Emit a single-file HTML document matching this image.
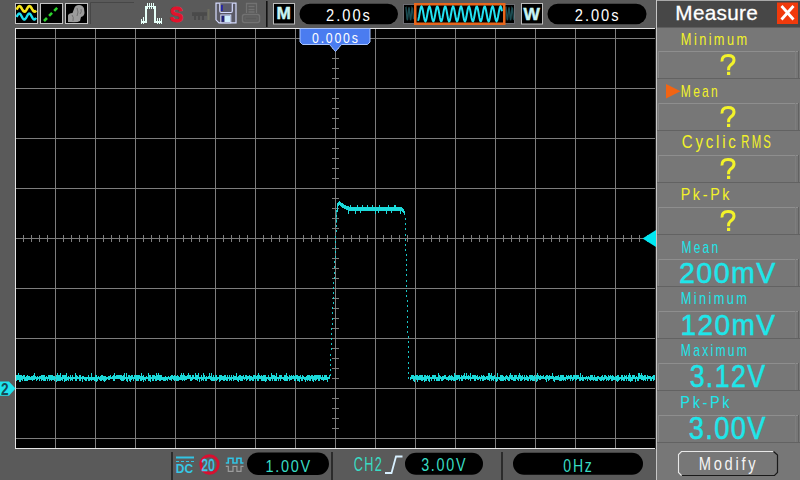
<!DOCTYPE html>
<html><head><meta charset="utf-8"><style>
html,body{margin:0;padding:0;width:800px;height:480px;overflow:hidden;background:#5a5a5a}
.t{position:absolute;left:0;top:0;white-space:pre;line-height:1;transform-origin:0 0;font-family:"Liberation Sans", sans-serif}
</style></head><body>
<svg width="800" height="480" viewBox="0 0 800 480" style="position:absolute;left:0;top:0"><rect x="15" y="28" width="641" height="421" fill="#000"/><rect x="55" y="29" width="1" height="419" fill="#7d7d7d"/><rect x="95" y="29" width="1" height="419" fill="#7d7d7d"/><rect x="135" y="29" width="1" height="419" fill="#7d7d7d"/><rect x="175" y="29" width="1" height="419" fill="#7d7d7d"/><rect x="215" y="29" width="1" height="419" fill="#7d7d7d"/><rect x="255" y="29" width="1" height="419" fill="#7d7d7d"/><rect x="295" y="29" width="1" height="419" fill="#7d7d7d"/><rect x="335" y="29" width="1" height="419" fill="#7d7d7d"/><rect x="375" y="29" width="1" height="419" fill="#7d7d7d"/><rect x="415" y="29" width="1" height="419" fill="#7d7d7d"/><rect x="455" y="29" width="1" height="419" fill="#7d7d7d"/><rect x="495" y="29" width="1" height="419" fill="#7d7d7d"/><rect x="535" y="29" width="1" height="419" fill="#7d7d7d"/><rect x="575" y="29" width="1" height="419" fill="#7d7d7d"/><rect x="615" y="29" width="1" height="419" fill="#7d7d7d"/><rect x="16" y="38" width="639" height="1" fill="#7d7d7d"/><rect x="16" y="88" width="639" height="1" fill="#7d7d7d"/><rect x="16" y="138" width="639" height="1" fill="#7d7d7d"/><rect x="16" y="188" width="639" height="1" fill="#7d7d7d"/><rect x="16" y="238" width="639" height="1" fill="#7d7d7d"/><rect x="16" y="288" width="639" height="1" fill="#7d7d7d"/><rect x="16" y="338" width="639" height="1" fill="#7d7d7d"/><rect x="16" y="388" width="639" height="1" fill="#7d7d7d"/><rect x="16" y="438" width="639" height="1" fill="#7d7d7d"/><rect x="23" y="235" width="1" height="7" fill="#7d7d7d"/><rect x="31" y="235" width="1" height="7" fill="#7d7d7d"/><rect x="39" y="235" width="1" height="7" fill="#7d7d7d"/><rect x="47" y="235" width="1" height="7" fill="#7d7d7d"/><rect x="55" y="235" width="1" height="7" fill="#7d7d7d"/><rect x="63" y="235" width="1" height="7" fill="#7d7d7d"/><rect x="71" y="235" width="1" height="7" fill="#7d7d7d"/><rect x="79" y="235" width="1" height="7" fill="#7d7d7d"/><rect x="87" y="235" width="1" height="7" fill="#7d7d7d"/><rect x="95" y="235" width="1" height="7" fill="#7d7d7d"/><rect x="103" y="235" width="1" height="7" fill="#7d7d7d"/><rect x="111" y="235" width="1" height="7" fill="#7d7d7d"/><rect x="119" y="235" width="1" height="7" fill="#7d7d7d"/><rect x="127" y="235" width="1" height="7" fill="#7d7d7d"/><rect x="135" y="235" width="1" height="7" fill="#7d7d7d"/><rect x="143" y="235" width="1" height="7" fill="#7d7d7d"/><rect x="151" y="235" width="1" height="7" fill="#7d7d7d"/><rect x="159" y="235" width="1" height="7" fill="#7d7d7d"/><rect x="167" y="235" width="1" height="7" fill="#7d7d7d"/><rect x="175" y="235" width="1" height="7" fill="#7d7d7d"/><rect x="183" y="235" width="1" height="7" fill="#7d7d7d"/><rect x="191" y="235" width="1" height="7" fill="#7d7d7d"/><rect x="199" y="235" width="1" height="7" fill="#7d7d7d"/><rect x="207" y="235" width="1" height="7" fill="#7d7d7d"/><rect x="215" y="235" width="1" height="7" fill="#7d7d7d"/><rect x="223" y="235" width="1" height="7" fill="#7d7d7d"/><rect x="231" y="235" width="1" height="7" fill="#7d7d7d"/><rect x="239" y="235" width="1" height="7" fill="#7d7d7d"/><rect x="247" y="235" width="1" height="7" fill="#7d7d7d"/><rect x="255" y="235" width="1" height="7" fill="#7d7d7d"/><rect x="263" y="235" width="1" height="7" fill="#7d7d7d"/><rect x="271" y="235" width="1" height="7" fill="#7d7d7d"/><rect x="279" y="235" width="1" height="7" fill="#7d7d7d"/><rect x="287" y="235" width="1" height="7" fill="#7d7d7d"/><rect x="295" y="235" width="1" height="7" fill="#7d7d7d"/><rect x="303" y="235" width="1" height="7" fill="#7d7d7d"/><rect x="311" y="235" width="1" height="7" fill="#7d7d7d"/><rect x="319" y="235" width="1" height="7" fill="#7d7d7d"/><rect x="327" y="235" width="1" height="7" fill="#7d7d7d"/><rect x="335" y="235" width="1" height="7" fill="#7d7d7d"/><rect x="343" y="235" width="1" height="7" fill="#7d7d7d"/><rect x="351" y="235" width="1" height="7" fill="#7d7d7d"/><rect x="359" y="235" width="1" height="7" fill="#7d7d7d"/><rect x="367" y="235" width="1" height="7" fill="#7d7d7d"/><rect x="375" y="235" width="1" height="7" fill="#7d7d7d"/><rect x="383" y="235" width="1" height="7" fill="#7d7d7d"/><rect x="391" y="235" width="1" height="7" fill="#7d7d7d"/><rect x="399" y="235" width="1" height="7" fill="#7d7d7d"/><rect x="407" y="235" width="1" height="7" fill="#7d7d7d"/><rect x="415" y="235" width="1" height="7" fill="#7d7d7d"/><rect x="423" y="235" width="1" height="7" fill="#7d7d7d"/><rect x="431" y="235" width="1" height="7" fill="#7d7d7d"/><rect x="439" y="235" width="1" height="7" fill="#7d7d7d"/><rect x="447" y="235" width="1" height="7" fill="#7d7d7d"/><rect x="455" y="235" width="1" height="7" fill="#7d7d7d"/><rect x="463" y="235" width="1" height="7" fill="#7d7d7d"/><rect x="471" y="235" width="1" height="7" fill="#7d7d7d"/><rect x="479" y="235" width="1" height="7" fill="#7d7d7d"/><rect x="487" y="235" width="1" height="7" fill="#7d7d7d"/><rect x="495" y="235" width="1" height="7" fill="#7d7d7d"/><rect x="503" y="235" width="1" height="7" fill="#7d7d7d"/><rect x="511" y="235" width="1" height="7" fill="#7d7d7d"/><rect x="519" y="235" width="1" height="7" fill="#7d7d7d"/><rect x="527" y="235" width="1" height="7" fill="#7d7d7d"/><rect x="535" y="235" width="1" height="7" fill="#7d7d7d"/><rect x="543" y="235" width="1" height="7" fill="#7d7d7d"/><rect x="551" y="235" width="1" height="7" fill="#7d7d7d"/><rect x="559" y="235" width="1" height="7" fill="#7d7d7d"/><rect x="567" y="235" width="1" height="7" fill="#7d7d7d"/><rect x="575" y="235" width="1" height="7" fill="#7d7d7d"/><rect x="583" y="235" width="1" height="7" fill="#7d7d7d"/><rect x="591" y="235" width="1" height="7" fill="#7d7d7d"/><rect x="599" y="235" width="1" height="7" fill="#7d7d7d"/><rect x="607" y="235" width="1" height="7" fill="#7d7d7d"/><rect x="615" y="235" width="1" height="7" fill="#7d7d7d"/><rect x="623" y="235" width="1" height="7" fill="#7d7d7d"/><rect x="631" y="235" width="1" height="7" fill="#7d7d7d"/><rect x="639" y="235" width="1" height="7" fill="#7d7d7d"/><rect x="647" y="235" width="1" height="7" fill="#7d7d7d"/><rect x="332" y="38" width="7" height="1" fill="#7d7d7d"/><rect x="332" y="48" width="7" height="1" fill="#7d7d7d"/><rect x="332" y="58" width="7" height="1" fill="#7d7d7d"/><rect x="332" y="68" width="7" height="1" fill="#7d7d7d"/><rect x="332" y="78" width="7" height="1" fill="#7d7d7d"/><rect x="332" y="88" width="7" height="1" fill="#7d7d7d"/><rect x="332" y="98" width="7" height="1" fill="#7d7d7d"/><rect x="332" y="108" width="7" height="1" fill="#7d7d7d"/><rect x="332" y="118" width="7" height="1" fill="#7d7d7d"/><rect x="332" y="128" width="7" height="1" fill="#7d7d7d"/><rect x="332" y="138" width="7" height="1" fill="#7d7d7d"/><rect x="332" y="148" width="7" height="1" fill="#7d7d7d"/><rect x="332" y="158" width="7" height="1" fill="#7d7d7d"/><rect x="332" y="168" width="7" height="1" fill="#7d7d7d"/><rect x="332" y="178" width="7" height="1" fill="#7d7d7d"/><rect x="332" y="188" width="7" height="1" fill="#7d7d7d"/><rect x="332" y="198" width="7" height="1" fill="#7d7d7d"/><rect x="332" y="208" width="7" height="1" fill="#7d7d7d"/><rect x="332" y="218" width="7" height="1" fill="#7d7d7d"/><rect x="332" y="228" width="7" height="1" fill="#7d7d7d"/><rect x="332" y="238" width="7" height="1" fill="#7d7d7d"/><rect x="332" y="248" width="7" height="1" fill="#7d7d7d"/><rect x="332" y="258" width="7" height="1" fill="#7d7d7d"/><rect x="332" y="268" width="7" height="1" fill="#7d7d7d"/><rect x="332" y="278" width="7" height="1" fill="#7d7d7d"/><rect x="332" y="288" width="7" height="1" fill="#7d7d7d"/><rect x="332" y="298" width="7" height="1" fill="#7d7d7d"/><rect x="332" y="308" width="7" height="1" fill="#7d7d7d"/><rect x="332" y="318" width="7" height="1" fill="#7d7d7d"/><rect x="332" y="328" width="7" height="1" fill="#7d7d7d"/><rect x="332" y="338" width="7" height="1" fill="#7d7d7d"/><rect x="332" y="348" width="7" height="1" fill="#7d7d7d"/><rect x="332" y="358" width="7" height="1" fill="#7d7d7d"/><rect x="332" y="368" width="7" height="1" fill="#7d7d7d"/><rect x="332" y="378" width="7" height="1" fill="#7d7d7d"/><rect x="332" y="388" width="7" height="1" fill="#7d7d7d"/><rect x="332" y="398" width="7" height="1" fill="#7d7d7d"/><rect x="332" y="408" width="7" height="1" fill="#7d7d7d"/><rect x="332" y="418" width="7" height="1" fill="#7d7d7d"/><rect x="332" y="428" width="7" height="1" fill="#7d7d7d"/><rect x="332" y="438" width="7" height="1" fill="#7d7d7d"/><rect x="15" y="28" width="641" height="1" fill="#e4e4e4"/><rect x="15" y="448" width="641" height="1" fill="#e4e4e4"/><rect x="15" y="28" width="1" height="421" fill="#e4e4e4"/><rect x="655" y="28" width="1" height="421" fill="#2a2a2a"/><g fill="#1cdada"><rect x="16" y="375" width="1" height="6"/><rect x="17" y="375" width="1" height="5"/><rect x="18" y="373" width="1" height="7"/><rect x="19" y="375" width="1" height="7"/><rect x="20" y="375" width="1" height="7"/><rect x="21" y="375" width="1" height="5"/><rect x="22" y="376" width="1" height="5"/><rect x="23" y="375" width="1" height="4"/><rect x="24" y="375" width="1" height="6"/><rect x="25" y="377" width="1" height="4"/><rect x="26" y="376" width="1" height="5"/><rect x="27" y="375" width="1" height="6"/><rect x="28" y="376" width="1" height="4"/><rect x="29" y="376" width="1" height="4"/><rect x="30" y="377" width="1" height="3"/><rect x="31" y="376" width="1" height="4"/><rect x="32" y="376" width="1" height="5"/><rect x="33" y="375" width="1" height="5"/><rect x="34" y="373" width="1" height="7"/><rect x="35" y="376" width="1" height="3"/><rect x="36" y="377" width="1" height="4"/><rect x="37" y="376" width="1" height="4"/><rect x="38" y="377" width="1" height="2"/><rect x="39" y="376" width="1" height="5"/><rect x="40" y="376" width="1" height="3"/><rect x="41" y="375" width="1" height="6"/><rect x="42" y="375" width="1" height="5"/><rect x="43" y="375" width="1" height="6"/><rect x="44" y="375" width="1" height="6"/><rect x="45" y="377" width="1" height="4"/><rect x="46" y="376" width="1" height="3"/><rect x="47" y="377" width="1" height="4"/><rect x="48" y="375" width="1" height="4"/><rect x="49" y="375" width="1" height="6"/><rect x="50" y="375" width="1" height="5"/><rect x="51" y="375" width="1" height="6"/><rect x="52" y="375" width="1" height="5"/><rect x="53" y="376" width="1" height="4"/><rect x="54" y="376" width="1" height="5"/><rect x="55" y="377" width="1" height="2"/><rect x="56" y="375" width="1" height="7"/><rect x="57" y="373" width="1" height="8"/><rect x="58" y="375" width="1" height="6"/><rect x="59" y="375" width="1" height="6"/><rect x="60" y="373" width="1" height="8"/><rect x="61" y="377" width="1" height="3"/><rect x="62" y="375" width="1" height="6"/><rect x="63" y="375" width="1" height="4"/><rect x="64" y="375" width="1" height="7"/><rect x="65" y="375" width="1" height="6"/><rect x="66" y="373" width="1" height="8"/><rect x="67" y="377" width="1" height="3"/><rect x="68" y="376" width="1" height="5"/><rect x="69" y="377" width="1" height="2"/><rect x="70" y="375" width="1" height="6"/><rect x="71" y="377" width="1" height="3"/><rect x="72" y="375" width="1" height="6"/><rect x="73" y="377" width="1" height="2"/><rect x="74" y="377" width="1" height="2"/><rect x="75" y="373" width="1" height="8"/><rect x="76" y="375" width="1" height="6"/><rect x="77" y="376" width="1" height="3"/><rect x="78" y="377" width="1" height="2"/><rect x="79" y="375" width="1" height="6"/><rect x="80" y="375" width="1" height="6"/><rect x="81" y="377" width="1" height="2"/><rect x="82" y="376" width="1" height="6"/><rect x="83" y="376" width="1" height="3"/><rect x="84" y="377" width="1" height="3"/><rect x="85" y="377" width="1" height="4"/><rect x="86" y="377" width="1" height="4"/><rect x="87" y="377" width="1" height="2"/><rect x="88" y="375" width="1" height="6"/><rect x="89" y="377" width="1" height="4"/><rect x="90" y="377" width="1" height="3"/><rect x="91" y="373" width="1" height="8"/><rect x="92" y="377" width="1" height="3"/><rect x="93" y="377" width="1" height="3"/><rect x="94" y="377" width="1" height="4"/><rect x="95" y="375" width="1" height="6"/><rect x="96" y="375" width="1" height="7"/><rect x="97" y="377" width="1" height="4"/><rect x="98" y="376" width="1" height="3"/><rect x="99" y="377" width="1" height="3"/><rect x="100" y="376" width="1" height="5"/><rect x="101" y="375" width="1" height="6"/><rect x="102" y="375" width="1" height="5"/><rect x="103" y="376" width="1" height="5"/><rect x="104" y="376" width="1" height="6"/><rect x="105" y="376" width="1" height="5"/><rect x="106" y="377" width="1" height="3"/><rect x="107" y="377" width="1" height="2"/><rect x="108" y="376" width="1" height="4"/><rect x="109" y="376" width="1" height="4"/><rect x="110" y="375" width="1" height="4"/><rect x="111" y="377" width="1" height="2"/><rect x="112" y="376" width="1" height="3"/><rect x="113" y="375" width="1" height="6"/><rect x="114" y="373" width="1" height="8"/><rect x="115" y="376" width="1" height="3"/><rect x="116" y="375" width="1" height="4"/><rect x="117" y="375" width="1" height="4"/><rect x="118" y="375" width="1" height="4"/><rect x="119" y="375" width="1" height="4"/><rect x="120" y="375" width="1" height="5"/><rect x="121" y="375" width="1" height="6"/><rect x="122" y="376" width="1" height="5"/><rect x="123" y="375" width="1" height="6"/><rect x="124" y="373" width="1" height="7"/><rect x="125" y="377" width="1" height="2"/><rect x="126" y="373" width="1" height="8"/><rect x="127" y="377" width="1" height="5"/><rect x="128" y="375" width="1" height="4"/><rect x="129" y="375" width="1" height="6"/><rect x="130" y="376" width="1" height="6"/><rect x="131" y="375" width="1" height="5"/><rect x="132" y="375" width="1" height="4"/><rect x="133" y="377" width="1" height="4"/><rect x="134" y="375" width="1" height="4"/><rect x="135" y="375" width="1" height="5"/><rect x="136" y="375" width="1" height="6"/><rect x="137" y="375" width="1" height="6"/><rect x="138" y="375" width="1" height="6"/><rect x="139" y="375" width="1" height="4"/><rect x="140" y="376" width="1" height="5"/><rect x="141" y="373" width="1" height="8"/><rect x="142" y="376" width="1" height="4"/><rect x="143" y="375" width="1" height="7"/><rect x="144" y="377" width="1" height="3"/><rect x="145" y="377" width="1" height="4"/><rect x="146" y="376" width="1" height="3"/><rect x="147" y="377" width="1" height="2"/><rect x="148" y="373" width="1" height="8"/><rect x="149" y="375" width="1" height="6"/><rect x="150" y="375" width="1" height="7"/><rect x="151" y="377" width="1" height="2"/><rect x="152" y="375" width="1" height="6"/><rect x="153" y="375" width="1" height="6"/><rect x="154" y="375" width="1" height="4"/><rect x="155" y="376" width="1" height="5"/><rect x="156" y="373" width="1" height="8"/><rect x="157" y="375" width="1" height="5"/><rect x="158" y="373" width="1" height="7"/><rect x="159" y="375" width="1" height="6"/><rect x="160" y="375" width="1" height="6"/><rect x="161" y="375" width="1" height="5"/><rect x="162" y="377" width="1" height="3"/><rect x="163" y="377" width="1" height="4"/><rect x="164" y="377" width="1" height="4"/><rect x="165" y="376" width="1" height="5"/><rect x="166" y="377" width="1" height="3"/><rect x="167" y="377" width="1" height="4"/><rect x="168" y="376" width="1" height="3"/><rect x="169" y="377" width="1" height="3"/><rect x="170" y="376" width="1" height="4"/><rect x="171" y="375" width="1" height="6"/><rect x="172" y="375" width="1" height="4"/><rect x="173" y="376" width="1" height="4"/><rect x="174" y="375" width="1" height="6"/><rect x="175" y="376" width="1" height="4"/><rect x="176" y="376" width="1" height="5"/><rect x="177" y="375" width="1" height="6"/><rect x="178" y="376" width="1" height="5"/><rect x="179" y="377" width="1" height="3"/><rect x="180" y="375" width="1" height="5"/><rect x="181" y="373" width="1" height="7"/><rect x="182" y="375" width="1" height="6"/><rect x="183" y="373" width="1" height="7"/><rect x="184" y="375" width="1" height="6"/><rect x="185" y="376" width="1" height="4"/><rect x="186" y="376" width="1" height="4"/><rect x="187" y="375" width="1" height="4"/><rect x="188" y="373" width="1" height="6"/><rect x="189" y="375" width="1" height="4"/><rect x="190" y="375" width="1" height="6"/><rect x="191" y="377" width="1" height="4"/><rect x="192" y="375" width="1" height="5"/><rect x="193" y="375" width="1" height="4"/><rect x="194" y="377" width="1" height="2"/><rect x="195" y="373" width="1" height="7"/><rect x="196" y="375" width="1" height="5"/><rect x="197" y="375" width="1" height="6"/><rect x="198" y="373" width="1" height="6"/><rect x="199" y="377" width="1" height="5"/><rect x="200" y="377" width="1" height="2"/><rect x="201" y="375" width="1" height="6"/><rect x="202" y="377" width="1" height="3"/><rect x="203" y="373" width="1" height="8"/><rect x="204" y="375" width="1" height="4"/><rect x="205" y="377" width="1" height="4"/><rect x="206" y="376" width="1" height="5"/><rect x="207" y="377" width="1" height="2"/><rect x="208" y="376" width="1" height="3"/><rect x="209" y="373" width="1" height="6"/><rect x="210" y="376" width="1" height="4"/><rect x="211" y="373" width="1" height="8"/><rect x="212" y="377" width="1" height="4"/><rect x="213" y="375" width="1" height="6"/><rect x="214" y="377" width="1" height="4"/><rect x="215" y="375" width="1" height="5"/><rect x="216" y="375" width="1" height="6"/><rect x="217" y="377" width="1" height="3"/><rect x="218" y="377" width="1" height="2"/><rect x="219" y="375" width="1" height="7"/><rect x="220" y="375" width="1" height="6"/><rect x="221" y="375" width="1" height="5"/><rect x="222" y="376" width="1" height="4"/><rect x="223" y="376" width="1" height="5"/><rect x="224" y="375" width="1" height="6"/><rect x="225" y="375" width="1" height="5"/><rect x="226" y="377" width="1" height="4"/><rect x="227" y="375" width="1" height="6"/><rect x="228" y="377" width="1" height="2"/><rect x="229" y="375" width="1" height="6"/><rect x="230" y="377" width="1" height="3"/><rect x="231" y="375" width="1" height="6"/><rect x="232" y="377" width="1" height="2"/><rect x="233" y="375" width="1" height="6"/><rect x="234" y="376" width="1" height="4"/><rect x="235" y="376" width="1" height="4"/><rect x="236" y="373" width="1" height="7"/><rect x="237" y="377" width="1" height="4"/><rect x="238" y="376" width="1" height="6"/><rect x="239" y="375" width="1" height="5"/><rect x="240" y="375" width="1" height="6"/><rect x="241" y="376" width="1" height="5"/><rect x="242" y="376" width="1" height="5"/><rect x="243" y="375" width="1" height="4"/><rect x="244" y="377" width="1" height="3"/><rect x="245" y="375" width="1" height="4"/><rect x="246" y="375" width="1" height="6"/><rect x="247" y="376" width="1" height="4"/><rect x="248" y="376" width="1" height="3"/><rect x="249" y="375" width="1" height="6"/><rect x="250" y="376" width="1" height="5"/><rect x="251" y="376" width="1" height="4"/><rect x="252" y="377" width="1" height="4"/><rect x="253" y="375" width="1" height="6"/><rect x="254" y="375" width="1" height="4"/><rect x="255" y="375" width="1" height="6"/><rect x="256" y="376" width="1" height="3"/><rect x="257" y="375" width="1" height="6"/><rect x="258" y="373" width="1" height="8"/><rect x="259" y="375" width="1" height="4"/><rect x="260" y="376" width="1" height="3"/><rect x="261" y="375" width="1" height="6"/><rect x="262" y="376" width="1" height="5"/><rect x="263" y="375" width="1" height="6"/><rect x="264" y="375" width="1" height="6"/><rect x="265" y="375" width="1" height="7"/><rect x="266" y="377" width="1" height="4"/><rect x="267" y="377" width="1" height="2"/><rect x="268" y="375" width="1" height="5"/><rect x="269" y="377" width="1" height="4"/><rect x="270" y="377" width="1" height="4"/><rect x="271" y="373" width="1" height="6"/><rect x="272" y="375" width="1" height="6"/><rect x="273" y="375" width="1" height="4"/><rect x="274" y="375" width="1" height="6"/><rect x="275" y="376" width="1" height="5"/><rect x="276" y="373" width="1" height="8"/><rect x="277" y="377" width="1" height="2"/><rect x="278" y="377" width="1" height="4"/><rect x="279" y="375" width="1" height="4"/><rect x="280" y="375" width="1" height="6"/><rect x="281" y="375" width="1" height="4"/><rect x="282" y="377" width="1" height="2"/><rect x="283" y="377" width="1" height="3"/><rect x="284" y="375" width="1" height="6"/><rect x="285" y="375" width="1" height="6"/><rect x="286" y="373" width="1" height="8"/><rect x="287" y="376" width="1" height="5"/><rect x="288" y="377" width="1" height="2"/><rect x="289" y="375" width="1" height="6"/><rect x="290" y="376" width="1" height="4"/><rect x="291" y="375" width="1" height="5"/><rect x="292" y="376" width="1" height="3"/><rect x="293" y="375" width="1" height="4"/><rect x="294" y="376" width="1" height="5"/><rect x="295" y="375" width="1" height="6"/><rect x="296" y="375" width="1" height="4"/><rect x="297" y="375" width="1" height="6"/><rect x="298" y="376" width="1" height="5"/><rect x="299" y="376" width="1" height="6"/><rect x="300" y="375" width="1" height="4"/><rect x="301" y="377" width="1" height="4"/><rect x="302" y="375" width="1" height="6"/><rect x="303" y="376" width="1" height="3"/><rect x="304" y="377" width="1" height="3"/><rect x="305" y="377" width="1" height="5"/><rect x="306" y="376" width="1" height="4"/><rect x="307" y="375" width="1" height="6"/><rect x="308" y="375" width="1" height="5"/><rect x="309" y="375" width="1" height="6"/><rect x="310" y="376" width="1" height="5"/><rect x="311" y="375" width="1" height="4"/><rect x="312" y="375" width="1" height="6"/><rect x="313" y="376" width="1" height="6"/><rect x="314" y="375" width="1" height="5"/><rect x="315" y="375" width="1" height="6"/><rect x="316" y="375" width="1" height="5"/><rect x="317" y="375" width="1" height="4"/><rect x="318" y="375" width="1" height="6"/><rect x="319" y="375" width="1" height="6"/><rect x="320" y="375" width="1" height="4"/><rect x="321" y="377" width="1" height="3"/><rect x="322" y="375" width="1" height="5"/><rect x="323" y="377" width="1" height="4"/><rect x="324" y="375" width="1" height="5"/><rect x="325" y="375" width="1" height="5"/><rect x="326" y="375" width="1" height="5"/><rect x="327" y="377" width="1" height="5"/><rect x="328" y="377" width="1" height="2"/><rect x="329" y="375" width="1" height="4"/><rect x="410" y="377" width="1" height="3"/><rect x="411" y="375" width="1" height="4"/><rect x="412" y="375" width="1" height="4"/><rect x="413" y="375" width="1" height="6"/><rect x="414" y="376" width="1" height="6"/><rect x="415" y="375" width="1" height="4"/><rect x="416" y="375" width="1" height="5"/><rect x="417" y="375" width="1" height="7"/><rect x="418" y="376" width="1" height="4"/><rect x="419" y="375" width="1" height="5"/><rect x="420" y="375" width="1" height="5"/><rect x="421" y="375" width="1" height="6"/><rect x="422" y="375" width="1" height="6"/><rect x="423" y="377" width="1" height="3"/><rect x="424" y="375" width="1" height="7"/><rect x="425" y="375" width="1" height="6"/><rect x="426" y="376" width="1" height="5"/><rect x="427" y="375" width="1" height="4"/><rect x="428" y="376" width="1" height="5"/><rect x="429" y="375" width="1" height="7"/><rect x="430" y="377" width="1" height="2"/><rect x="431" y="377" width="1" height="4"/><rect x="432" y="375" width="1" height="4"/><rect x="433" y="375" width="1" height="4"/><rect x="434" y="375" width="1" height="6"/><rect x="435" y="375" width="1" height="4"/><rect x="436" y="377" width="1" height="4"/><rect x="437" y="377" width="1" height="4"/><rect x="438" y="373" width="1" height="8"/><rect x="439" y="375" width="1" height="6"/><rect x="440" y="376" width="1" height="3"/><rect x="441" y="377" width="1" height="4"/><rect x="442" y="376" width="1" height="5"/><rect x="443" y="376" width="1" height="4"/><rect x="444" y="375" width="1" height="4"/><rect x="445" y="375" width="1" height="4"/><rect x="446" y="377" width="1" height="3"/><rect x="447" y="377" width="1" height="3"/><rect x="448" y="376" width="1" height="5"/><rect x="449" y="375" width="1" height="5"/><rect x="450" y="376" width="1" height="4"/><rect x="451" y="375" width="1" height="6"/><rect x="452" y="376" width="1" height="4"/><rect x="453" y="377" width="1" height="4"/><rect x="454" y="373" width="1" height="8"/><rect x="455" y="375" width="1" height="6"/><rect x="456" y="375" width="1" height="5"/><rect x="457" y="375" width="1" height="5"/><rect x="458" y="375" width="1" height="4"/><rect x="459" y="375" width="1" height="6"/><rect x="460" y="377" width="1" height="2"/><rect x="461" y="375" width="1" height="6"/><rect x="462" y="376" width="1" height="5"/><rect x="463" y="375" width="1" height="4"/><rect x="464" y="373" width="1" height="6"/><rect x="465" y="376" width="1" height="4"/><rect x="466" y="373" width="1" height="6"/><rect x="467" y="376" width="1" height="3"/><rect x="468" y="375" width="1" height="5"/><rect x="469" y="376" width="1" height="3"/><rect x="470" y="373" width="1" height="8"/><rect x="471" y="377" width="1" height="2"/><rect x="472" y="375" width="1" height="4"/><rect x="473" y="375" width="1" height="4"/><rect x="474" y="375" width="1" height="6"/><rect x="475" y="375" width="1" height="6"/><rect x="476" y="376" width="1" height="3"/><rect x="477" y="375" width="1" height="5"/><rect x="478" y="377" width="1" height="3"/><rect x="479" y="376" width="1" height="3"/><rect x="480" y="377" width="1" height="4"/><rect x="481" y="375" width="1" height="4"/><rect x="482" y="376" width="1" height="5"/><rect x="483" y="375" width="1" height="6"/><rect x="484" y="376" width="1" height="4"/><rect x="485" y="377" width="1" height="3"/><rect x="486" y="376" width="1" height="3"/><rect x="487" y="376" width="1" height="4"/><rect x="488" y="373" width="1" height="7"/><rect x="489" y="373" width="1" height="8"/><rect x="490" y="375" width="1" height="4"/><rect x="491" y="373" width="1" height="8"/><rect x="492" y="376" width="1" height="4"/><rect x="493" y="376" width="1" height="5"/><rect x="494" y="375" width="1" height="4"/><rect x="495" y="377" width="1" height="4"/><rect x="496" y="377" width="1" height="5"/><rect x="497" y="373" width="1" height="8"/><rect x="498" y="377" width="1" height="2"/><rect x="499" y="377" width="1" height="3"/><rect x="500" y="375" width="1" height="6"/><rect x="501" y="375" width="1" height="6"/><rect x="502" y="375" width="1" height="6"/><rect x="503" y="376" width="1" height="5"/><rect x="504" y="377" width="1" height="3"/><rect x="505" y="376" width="1" height="5"/><rect x="506" y="375" width="1" height="4"/><rect x="507" y="376" width="1" height="4"/><rect x="508" y="377" width="1" height="4"/><rect x="509" y="375" width="1" height="6"/><rect x="510" y="373" width="1" height="6"/><rect x="511" y="375" width="1" height="5"/><rect x="512" y="375" width="1" height="5"/><rect x="513" y="377" width="1" height="4"/><rect x="514" y="375" width="1" height="6"/><rect x="515" y="375" width="1" height="6"/><rect x="516" y="375" width="1" height="4"/><rect x="517" y="377" width="1" height="3"/><rect x="518" y="375" width="1" height="6"/><rect x="519" y="373" width="1" height="6"/><rect x="520" y="375" width="1" height="6"/><rect x="521" y="376" width="1" height="5"/><rect x="522" y="375" width="1" height="5"/><rect x="523" y="377" width="1" height="2"/><rect x="524" y="375" width="1" height="6"/><rect x="525" y="377" width="1" height="3"/><rect x="526" y="375" width="1" height="5"/><rect x="527" y="376" width="1" height="5"/><rect x="528" y="377" width="1" height="4"/><rect x="529" y="375" width="1" height="4"/><rect x="530" y="375" width="1" height="6"/><rect x="531" y="375" width="1" height="5"/><rect x="532" y="375" width="1" height="6"/><rect x="533" y="376" width="1" height="5"/><rect x="534" y="375" width="1" height="6"/><rect x="535" y="377" width="1" height="2"/><rect x="536" y="375" width="1" height="7"/><rect x="537" y="373" width="1" height="8"/><rect x="538" y="375" width="1" height="4"/><rect x="539" y="376" width="1" height="4"/><rect x="540" y="375" width="1" height="5"/><rect x="541" y="376" width="1" height="3"/><rect x="542" y="376" width="1" height="3"/><rect x="543" y="375" width="1" height="4"/><rect x="544" y="377" width="1" height="2"/><rect x="545" y="376" width="1" height="4"/><rect x="546" y="375" width="1" height="7"/><rect x="547" y="375" width="1" height="4"/><rect x="548" y="376" width="1" height="5"/><rect x="549" y="375" width="1" height="5"/><rect x="550" y="376" width="1" height="3"/><rect x="551" y="376" width="1" height="3"/><rect x="552" y="373" width="1" height="6"/><rect x="553" y="376" width="1" height="5"/><rect x="554" y="377" width="1" height="5"/><rect x="555" y="376" width="1" height="4"/><rect x="556" y="376" width="1" height="4"/><rect x="557" y="376" width="1" height="4"/><rect x="558" y="375" width="1" height="5"/><rect x="559" y="377" width="1" height="4"/><rect x="560" y="375" width="1" height="6"/><rect x="561" y="375" width="1" height="6"/><rect x="562" y="375" width="1" height="5"/><rect x="563" y="375" width="1" height="6"/><rect x="564" y="377" width="1" height="3"/><rect x="565" y="377" width="1" height="4"/><rect x="566" y="375" width="1" height="4"/><rect x="567" y="376" width="1" height="4"/><rect x="568" y="375" width="1" height="4"/><rect x="569" y="376" width="1" height="3"/><rect x="570" y="375" width="1" height="6"/><rect x="571" y="375" width="1" height="4"/><rect x="572" y="377" width="1" height="4"/><rect x="573" y="375" width="1" height="5"/><rect x="574" y="375" width="1" height="4"/><rect x="575" y="375" width="1" height="6"/><rect x="576" y="375" width="1" height="5"/><rect x="577" y="375" width="1" height="4"/><rect x="578" y="375" width="1" height="4"/><rect x="579" y="377" width="1" height="4"/><rect x="580" y="373" width="1" height="8"/><rect x="581" y="377" width="1" height="3"/><rect x="582" y="375" width="1" height="6"/><rect x="583" y="377" width="1" height="4"/><rect x="584" y="377" width="1" height="2"/><rect x="585" y="377" width="1" height="3"/><rect x="586" y="376" width="1" height="3"/><rect x="587" y="377" width="1" height="4"/><rect x="588" y="376" width="1" height="3"/><rect x="589" y="377" width="1" height="3"/><rect x="590" y="375" width="1" height="6"/><rect x="591" y="375" width="1" height="5"/><rect x="592" y="375" width="1" height="5"/><rect x="593" y="377" width="1" height="4"/><rect x="594" y="375" width="1" height="5"/><rect x="595" y="377" width="1" height="4"/><rect x="596" y="377" width="1" height="4"/><rect x="597" y="376" width="1" height="5"/><rect x="598" y="376" width="1" height="3"/><rect x="599" y="377" width="1" height="3"/><rect x="600" y="377" width="1" height="4"/><rect x="601" y="376" width="1" height="5"/><rect x="602" y="375" width="1" height="5"/><rect x="603" y="377" width="1" height="4"/><rect x="604" y="375" width="1" height="5"/><rect x="605" y="375" width="1" height="4"/><rect x="606" y="376" width="1" height="5"/><rect x="607" y="377" width="1" height="3"/><rect x="608" y="375" width="1" height="6"/><rect x="609" y="376" width="1" height="4"/><rect x="610" y="375" width="1" height="4"/><rect x="611" y="376" width="1" height="5"/><rect x="612" y="375" width="1" height="6"/><rect x="613" y="376" width="1" height="4"/><rect x="614" y="377" width="1" height="3"/><rect x="615" y="376" width="1" height="4"/><rect x="616" y="376" width="1" height="5"/><rect x="617" y="375" width="1" height="7"/><rect x="618" y="375" width="1" height="6"/><rect x="619" y="377" width="1" height="3"/><rect x="620" y="377" width="1" height="2"/><rect x="621" y="375" width="1" height="6"/><rect x="622" y="375" width="1" height="5"/><rect x="623" y="377" width="1" height="4"/><rect x="624" y="375" width="1" height="6"/><rect x="625" y="376" width="1" height="3"/><rect x="626" y="375" width="1" height="6"/><rect x="627" y="377" width="1" height="2"/><rect x="628" y="375" width="1" height="6"/><rect x="629" y="373" width="1" height="8"/><rect x="630" y="375" width="1" height="7"/><rect x="631" y="377" width="1" height="4"/><rect x="632" y="375" width="1" height="6"/><rect x="633" y="375" width="1" height="4"/><rect x="634" y="375" width="1" height="4"/><rect x="635" y="377" width="1" height="5"/><rect x="636" y="376" width="1" height="3"/><rect x="637" y="377" width="1" height="4"/><rect x="638" y="373" width="1" height="8"/><rect x="639" y="373" width="1" height="6"/><rect x="640" y="375" width="1" height="4"/><rect x="641" y="373" width="1" height="7"/><rect x="642" y="375" width="1" height="5"/><rect x="643" y="376" width="1" height="5"/><rect x="644" y="375" width="1" height="5"/><rect x="645" y="375" width="1" height="6"/><rect x="646" y="377" width="1" height="2"/><rect x="647" y="375" width="1" height="6"/><rect x="648" y="376" width="1" height="3"/><rect x="649" y="376" width="1" height="3"/><rect x="650" y="376" width="1" height="5"/><rect x="651" y="377" width="1" height="4"/><rect x="652" y="376" width="1" height="3"/><rect x="653" y="375" width="1" height="6"/><rect x="654" y="375" width="1" height="5"/><rect x="337" y="203" width="1" height="9"/><rect x="338" y="202" width="1" height="4"/><rect x="339" y="201" width="1" height="4"/><rect x="340" y="202" width="1" height="4"/><rect x="341" y="203" width="1" height="4"/><rect x="342" y="203" width="1" height="5"/><rect x="343" y="204" width="1" height="4"/><rect x="344" y="205" width="1" height="4"/><rect x="345" y="205" width="1" height="4"/><rect x="346" y="206" width="1" height="4"/><rect x="347" y="206" width="1" height="4"/><rect x="348" y="206" width="1" height="8"/><rect x="349" y="207" width="1" height="4"/><rect x="350" y="205" width="1" height="6"/><rect x="351" y="207" width="1" height="4"/><rect x="352" y="207" width="1" height="4"/><rect x="353" y="207" width="1" height="4"/><rect x="354" y="207" width="1" height="4"/><rect x="355" y="207" width="1" height="7"/><rect x="356" y="207" width="1" height="4"/><rect x="357" y="205" width="1" height="6"/><rect x="358" y="207" width="1" height="4"/><rect x="359" y="207" width="1" height="4"/><rect x="360" y="207" width="1" height="6"/><rect x="361" y="207" width="1" height="4"/><rect x="362" y="205" width="1" height="6"/><rect x="363" y="207" width="1" height="4"/><rect x="364" y="207" width="1" height="4"/><rect x="365" y="207" width="1" height="4"/><rect x="366" y="207" width="1" height="4"/><rect x="367" y="205" width="1" height="6"/><rect x="368" y="207" width="1" height="4"/><rect x="369" y="207" width="1" height="4"/><rect x="370" y="207" width="1" height="4"/><rect x="371" y="207" width="1" height="4"/><rect x="372" y="205" width="1" height="6"/><rect x="373" y="207" width="1" height="4"/><rect x="374" y="207" width="1" height="4"/><rect x="375" y="207" width="1" height="7"/><rect x="376" y="207" width="1" height="4"/><rect x="377" y="207" width="1" height="4"/><rect x="378" y="207" width="1" height="6"/><rect x="379" y="205" width="1" height="6"/><rect x="380" y="207" width="1" height="4"/><rect x="381" y="207" width="1" height="4"/><rect x="382" y="207" width="1" height="4"/><rect x="383" y="207" width="1" height="4"/><rect x="384" y="207" width="1" height="4"/><rect x="385" y="207" width="1" height="4"/><rect x="386" y="207" width="1" height="7"/><rect x="387" y="207" width="1" height="4"/><rect x="388" y="205" width="1" height="6"/><rect x="389" y="207" width="1" height="4"/><rect x="390" y="207" width="1" height="4"/><rect x="391" y="207" width="1" height="6"/><rect x="392" y="207" width="1" height="4"/><rect x="393" y="207" width="1" height="4"/><rect x="394" y="205" width="1" height="6"/><rect x="395" y="205" width="1" height="6"/><rect x="396" y="207" width="1" height="4"/><rect x="397" y="207" width="1" height="4"/><rect x="398" y="207" width="1" height="4"/><rect x="399" y="207" width="1" height="4"/><rect x="400" y="207" width="1" height="7"/><rect x="401" y="207" width="1" height="4"/><rect x="402" y="208" width="1" height="4"/><rect x="403" y="209" width="1" height="4"/><rect x="404" y="211" width="1" height="3"/><rect x="330" y="374" width="1" height="2" opacity="0.9"/><rect x="330" y="369" width="1" height="2" opacity="0.9"/><rect x="330" y="364" width="1" height="2" opacity="0.9"/><rect x="330" y="359" width="1" height="2" opacity="0.9"/><rect x="330" y="354" width="1" height="2" opacity="0.9"/><rect x="331" y="348" width="1" height="2" opacity="0.9"/><rect x="331" y="343" width="1" height="2" opacity="0.9"/><rect x="331" y="338" width="1" height="2" opacity="0.9"/><rect x="331" y="333" width="1" height="2" opacity="0.9"/><rect x="331" y="328" width="1" height="2" opacity="0.9"/><rect x="332" y="323" width="1" height="2" opacity="0.9"/><rect x="332" y="318" width="1" height="2" opacity="0.9"/><rect x="332" y="312" width="1" height="2" opacity="0.9"/><rect x="332" y="307" width="1" height="2" opacity="0.9"/><rect x="333" y="302" width="1" height="2" opacity="0.9"/><rect x="333" y="297" width="1" height="2" opacity="0.9"/><rect x="333" y="292" width="1" height="2" opacity="0.9"/><rect x="333" y="287" width="1" height="2" opacity="0.9"/><rect x="333" y="282" width="1" height="2" opacity="0.9"/><rect x="334" y="277" width="1" height="2" opacity="0.9"/><rect x="334" y="272" width="1" height="2" opacity="0.9"/><rect x="334" y="266" width="1" height="2" opacity="0.9"/><rect x="334" y="261" width="1" height="2" opacity="0.9"/><rect x="335" y="256" width="1" height="2" opacity="0.9"/><rect x="335" y="251" width="1" height="2" opacity="0.9"/><rect x="335" y="246" width="1" height="2" opacity="0.9"/><rect x="335" y="241" width="1" height="2" opacity="0.9"/><rect x="335" y="236" width="1" height="2" opacity="0.9"/><rect x="336" y="230" width="1" height="2" opacity="0.9"/><rect x="336" y="225" width="1" height="2" opacity="0.9"/><rect x="336" y="220" width="1" height="2" opacity="0.9"/><rect x="336" y="215" width="1" height="2" opacity="0.9"/><rect x="336" y="210" width="1" height="2" opacity="0.9"/><rect x="404" y="213" width="1" height="2" opacity="0.9"/><rect x="405" y="218" width="1" height="2" opacity="0.9"/><rect x="405" y="223" width="1" height="2" opacity="0.9"/><rect x="405" y="228" width="1" height="2" opacity="0.9"/><rect x="405" y="234" width="1" height="2" opacity="0.9"/><rect x="405" y="239" width="1" height="2" opacity="0.9"/><rect x="405" y="244" width="1" height="2" opacity="0.9"/><rect x="405" y="249" width="1" height="2" opacity="0.9"/><rect x="406" y="254" width="1" height="2" opacity="0.9"/><rect x="406" y="259" width="1" height="2" opacity="0.9"/><rect x="406" y="264" width="1" height="2" opacity="0.9"/><rect x="406" y="269" width="1" height="2" opacity="0.9"/><rect x="406" y="274" width="1" height="2" opacity="0.9"/><rect x="406" y="280" width="1" height="2" opacity="0.9"/><rect x="406" y="285" width="1" height="2" opacity="0.9"/><rect x="406" y="290" width="1" height="2" opacity="0.9"/><rect x="406" y="295" width="1" height="2" opacity="0.9"/><rect x="407" y="300" width="1" height="2" opacity="0.9"/><rect x="407" y="305" width="1" height="2" opacity="0.9"/><rect x="407" y="310" width="1" height="2" opacity="0.9"/><rect x="407" y="316" width="1" height="2" opacity="0.9"/><rect x="407" y="321" width="1" height="2" opacity="0.9"/><rect x="407" y="326" width="1" height="2" opacity="0.9"/><rect x="407" y="331" width="1" height="2" opacity="0.9"/><rect x="408" y="336" width="1" height="2" opacity="0.9"/><rect x="408" y="341" width="1" height="2" opacity="0.9"/><rect x="408" y="346" width="1" height="2" opacity="0.9"/><rect x="408" y="351" width="1" height="2" opacity="0.9"/><rect x="408" y="356" width="1" height="2" opacity="0.9"/><rect x="408" y="362" width="1" height="2" opacity="0.9"/><rect x="408" y="367" width="1" height="2" opacity="0.9"/><rect x="408" y="372" width="1" height="2" opacity="0.9"/><rect x="408" y="377" width="1" height="2" opacity="0.9"/><rect x="336" y="211" width="1" height="12" opacity="0.6"/></g><path d="M300,28.5 H370 V42 L367.5,44.5 H341.5 L335.5,51.5 L329.5,44.5 H302.5 L300,42 Z" fill="#4a7cf0" stroke="#a8c4ff" stroke-width="1"/><polygon points="0,381.5 9,381.5 15.5,388.5 9,395.8 0,395.8" fill="#1ee4ee"/><polygon points="642.5,238.6 656,230 656,247" fill="#00e8f2"/><rect x="15.5" y="3.5" width="22" height="20" fill="#000" stroke="#c4c4c4"/><polyline points="16.6,9.6 17.1,8.7 17.6,7.9 18.1,7.1 18.6,6.5 19.1,6.2 19.6,6.1 20.1,6.3 20.6,6.7 21.1,7.4 21.6,8.2 22.1,9.1 22.6,9.9 23.1,10.7 23.6,11.3 24.1,11.6 24.6,11.7 25.1,11.5 25.6,11.1 26.1,10.4 26.6,9.6 27.1,8.7 27.6,7.9 28.1,7.1 28.6,6.5 29.1,6.2 29.6,6.1 30.1,6.3 30.6,6.7 31.1,7.4 31.6,8.2 32.1,9.1 32.6,9.9 33.1,10.7 33.6,11.3 34.1,11.6 34.6,11.7 35.1,11.5 35.6,11.1 36.1,10.4" fill="none" stroke="#f4e41c" stroke-width="2.6"/><polyline points="16.6,17.0 17.1,16.0 17.6,15.1 18.1,14.4 18.6,13.9 19.1,13.6 19.6,13.7 20.1,14.0 20.6,14.6 21.1,15.3 21.6,16.2 22.1,17.2 22.6,18.1 23.1,18.8 23.6,19.3 24.1,19.6 24.6,19.5 25.1,19.2 25.6,18.6 26.1,17.9 26.6,17.0 27.1,16.0 27.6,15.1 28.1,14.4 28.6,13.9 29.1,13.6 29.6,13.7 30.1,14.0 30.6,14.6 31.1,15.3 31.6,16.2 32.1,17.2 32.6,18.1 33.1,18.8 33.6,19.3 34.1,19.6 34.6,19.5 35.1,19.2 35.6,18.6 36.1,17.9" fill="none" stroke="#1ee0f0" stroke-width="2.4"/><rect x="40.5" y="3.5" width="22" height="20" fill="#000" stroke="#c4c4c4"/><line x1="44" y1="21" x2="58.5" y2="6.5" stroke="#2ed42e" stroke-width="2.6" stroke-dasharray="4.2 3"/><rect x="65.5" y="3.5" width="22" height="20" fill="#000" stroke="#c4c4c4"/><path d="M68,22 L68,15.5 Q68.5,13 72.5,13 L74,9 Q75,5 79,5 Q83,5 84,8.5 L84.5,13 Q84,16.5 81,17 L80,21 Q78,22.3 74,22.3 Z" fill="#9c9c9c"/><path d="M72,15 Q74,17 73,21 M77,8 Q79,12 77,16 M81,9 Q82,12 80,14" fill="none" stroke="#707070" stroke-width="1"/><path d="M90.5,24 V2.5 H134" fill="none" stroke="#474747" stroke-width="1"/><g fill="#e6fff8" shape-rendering="crispEdges"><rect x="145" y="6" width="2" height="17"/><rect x="145" y="6" width="11" height="1"/><rect x="147" y="3" width="1" height="6"/><rect x="149" y="3" width="1" height="6"/><rect x="151" y="3" width="1" height="6"/><rect x="153" y="3" width="1" height="6"/><rect x="154" y="6" width="2" height="17"/><rect x="155" y="21" width="7" height="2"/><rect x="157" y="18" width="1" height="6"/><rect x="159" y="18" width="1" height="6"/><rect x="161" y="18" width="1" height="6"/><rect x="141" y="21" width="5" height="2"/><rect x="143" y="17" width="1" height="7"/><rect x="141" y="19" width="1" height="5"/></g><path d="M192,12.3 H207 V15.7 H204 V20 H202 V16 H200 V20 H198 V16 H196 V20 H194 V16 H192 Z" fill="#4a4a4a"/><rect x="207.5" y="9" width="2" height="11" fill="#6c6c5e"/><path d="M216,3.2 H236 V22.8 H219 L216,19.8 Z" fill="#5a5a66" stroke="#d6dcff" stroke-width="1.2"/><path d="M219.8,3.2 V11 Q219.8,12.5 221.3,12.5 H231 Q232.3,12.5 232.3,11 V3.2" fill="#5c5c6a" stroke="#d6dcff" stroke-width="1.2"/><rect x="221" y="5" width="1.8" height="6" fill="#2424a8"/><rect x="220.8" y="15" width="10" height="7.8" fill="#3a3a58" stroke="#d6dcff" stroke-width="1"/><rect x="224.5" y="15.6" width="5.8" height="6.4" fill="#d0f0ff"/><rect x="222" y="16" width="1.8" height="5.5" fill="#1c1c80"/><path d="M246.5,13 V3.5 H256.5 V13 M248.5,6.5 H254.5 M248.5,9.5 H254.5 M248.5,12 H254.5" fill="none" stroke="#727272" stroke-width="1.3"/><rect x="242.5" y="14.5" width="17" height="8" rx="2" fill="none" stroke="#727272" stroke-width="1.5"/><rect x="245" y="17" width="12" height="3" fill="none" stroke="#666" stroke-width="1"/><rect x="266" y="1" width="1.6" height="26" fill="#141414"/><rect x="273.5" y="3.5" width="21" height="20.5" fill="#000" stroke="#bcbcbc"/><rect x="299.5" y="3.75" width="98.5" height="20.5" rx="10.25" fill="#000"/><rect x="403.5" y="4.5" width="111" height="19" fill="#000" stroke="#6c6c72" stroke-width="1"/><polyline points="405.5,8.3 406.0,7.8 406.5,12.6 407.0,18.5 407.5,20.2 408.0,16.2 408.5,10.1 409.0,7.3 409.5,10.3 410.0,16.4 410.5,20.2 411.0,18.3 411.5,12.4 412.0,7.8 412.5,8.5 413.0,13.9 413.5,19.3" fill="none" stroke="#1b4c52" stroke-width="1.4"/><polyline points="505.5,8.3 506.0,7.8 506.5,12.6 507.0,18.5 507.5,20.2 508.0,16.2 508.5,10.1 509.0,7.3 509.5,10.3 510.0,16.4 510.5,20.2 511.0,18.3 511.5,12.4 512.0,7.8 512.5,8.5 513.0,13.9 513.5,19.3 514.0,19.8" fill="none" stroke="#1b4c52" stroke-width="1.4"/><rect x="415.25" y="4.25" width="89" height="19.5" fill="#000" stroke="#e8661c" stroke-width="2.5"/><polyline points="418.0,20.8 418.5,19.2 419.0,16.8 419.5,14.0 420.0,11.1 420.5,8.7 421.0,7.0 421.5,6.5 422.0,7.1 422.5,8.8 423.0,11.3 423.5,14.1 424.0,17.0 424.5,19.4 425.0,20.9 425.5,21.3 426.0,20.6 426.5,18.8 427.0,16.3 427.5,13.4 428.0,10.5 428.5,8.3 429.0,6.8 429.5,6.5 430.0,7.4 430.5,9.2 431.0,11.8 431.5,14.7 432.0,17.5 432.5,19.7 433.0,21.0 433.5,21.2 434.0,20.3 434.5,18.3 435.0,15.7 435.5,12.8 436.0,10.0 436.5,7.9 437.0,6.7 437.5,6.6 438.0,7.7 438.5,9.7 439.0,12.4 439.5,15.3 440.0,18.0 440.5,20.1 441.0,21.2 441.5,21.1 442.0,20.0 442.5,17.9 443.0,15.1 443.5,12.2 444.0,9.5 444.5,7.6 445.0,6.6 445.5,6.7 446.0,8.0 446.5,10.2 447.0,13.0 447.5,15.9 448.0,18.5 448.5,20.4 449.0,21.3 449.5,21.0 450.0,19.6 450.5,17.3 451.0,14.5 451.5,11.6 452.0,9.1 452.5,7.3 453.0,6.5 453.5,6.9 454.0,8.4 454.5,10.7 455.0,13.6 455.5,16.4 456.0,18.9 456.5,20.6 457.0,21.3 457.5,20.8 458.0,19.2 458.5,16.8 459.0,14.0 459.5,11.1 460.0,8.7 460.5,7.0 461.0,6.5 461.5,7.1 462.0,8.8 462.5,11.3 463.0,14.1 463.5,17.0 464.0,19.4 464.5,20.9 465.0,21.3 465.5,20.6 466.0,18.8 466.5,16.3 467.0,13.4 467.5,10.5 468.0,8.3 468.5,6.8 469.0,6.5 469.5,7.4 470.0,9.2 470.5,11.8 471.0,14.7 471.5,17.5 472.0,19.7 472.5,21.0 473.0,21.2 473.5,20.3 474.0,18.3 474.5,15.7 475.0,12.8 475.5,10.0 476.0,7.9 476.5,6.7 477.0,6.6 477.5,7.7 478.0,9.7 478.5,12.4 479.0,15.3 479.5,18.0 480.0,20.1 480.5,21.2 481.0,21.1 481.5,20.0 482.0,17.9 482.5,15.1 483.0,12.2 483.5,9.5 484.0,7.6 484.5,6.6 485.0,6.7 485.5,8.0 486.0,10.2 486.5,13.0 487.0,15.9 487.5,18.5 488.0,20.4 488.5,21.3 489.0,21.0 489.5,19.6 490.0,17.3 490.5,14.5 491.0,11.6 491.5,9.1 492.0,7.3 492.5,6.5 493.0,6.9 493.5,8.4 494.0,10.7 494.5,13.6 495.0,16.4 495.5,18.9 496.0,20.6 496.5,21.3 497.0,20.8 497.5,19.2 498.0,16.8 498.5,14.0 499.0,11.1 499.5,8.7 500.0,7.0 500.5,6.5 501.0,7.1 501.5,8.8 502.0,11.3" fill="none" stroke="#22e2f2" stroke-width="2"/><rect x="521.5" y="3.5" width="21" height="20.5" fill="#000" stroke="#bcbcbc"/><rect x="547.5" y="3.75" width="99" height="20.5" rx="10.25" fill="#000"/><rect x="171.3" y="452" width="1.4" height="28" fill="#181818"/><rect x="176" y="456.5" width="18" height="2" fill="#32c4e4"/><path d="M176,461.5 H179 M181,461.5 H184 M186,461.5 H189 M191,461.5 H194" stroke="#32c4e4" stroke-width="1"/><circle cx="209.5" cy="464.5" r="8.7" fill="none" stroke="#d81030" stroke-width="2.9"/><path d="M225.8,463 H228.3 V458.2 H233 V463 H236.9 V458.2 H241 V463 H243.5" fill="none" stroke="#32c4e4" stroke-width="1.6"/><path d="M225.8,466.3 H228.3 V471.3 H233 V466.3 H236.9 V471.3 H241 V466.3 H243.5" fill="none" stroke="#9c9c9c" stroke-width="1.2"/><rect x="247" y="452.5" width="82" height="22.5" rx="11.25" fill="#000"/><rect x="331.3" y="452" width="1.4" height="28" fill="#181818"/><path d="M385,473 H391.5 L396,456.5 H402.5" fill="none" stroke="#d8f0ff" stroke-width="1.8"/><rect x="405" y="452.75" width="78" height="22" rx="11" fill="#000"/><rect x="501.3" y="452" width="1.4" height="28" fill="#181818"/><rect x="513" y="452.75" width="130" height="22" rx="11" fill="#000"/><rect x="656" y="0" width="1" height="480" fill="#c6c6c6"/><rect x="657" y="0" width="143" height="480" fill="#777777"/><rect x="657" y="0" width="143" height="27.5" fill="#474747"/><rect x="657" y="0" width="143" height="1" fill="#a8a8a8"/><rect x="777" y="2.5" width="21" height="21.5" fill="#f03a0c"/><path d="M781.5,6 L793.5,19.5 M793.5,6 L781.5,19.5" stroke="#fff" stroke-width="2.8"/><rect x="658" y="51" width="141" height="1" fill="#8e8e8e"/><rect x="657" y="78" width="143" height="1" fill="#626262"/><rect x="658" y="51" width="1" height="27" fill="#888"/><rect x="795" y="51" width="1" height="27" fill="#7e7e7e"/><rect x="798" y="51" width="1" height="27" fill="#626262"/><rect x="658" y="103" width="141" height="1" fill="#8e8e8e"/><rect x="657" y="130" width="143" height="1" fill="#626262"/><rect x="658" y="103" width="1" height="27" fill="#888"/><rect x="795" y="103" width="1" height="27" fill="#7e7e7e"/><rect x="798" y="103" width="1" height="27" fill="#626262"/><rect x="658" y="155" width="141" height="1" fill="#8e8e8e"/><rect x="657" y="182" width="143" height="1" fill="#626262"/><rect x="658" y="155" width="1" height="27" fill="#888"/><rect x="795" y="155" width="1" height="27" fill="#7e7e7e"/><rect x="798" y="155" width="1" height="27" fill="#626262"/><rect x="658" y="207" width="141" height="1" fill="#8e8e8e"/><rect x="657" y="234" width="143" height="1" fill="#626262"/><rect x="658" y="207" width="1" height="27" fill="#888"/><rect x="795" y="207" width="1" height="27" fill="#7e7e7e"/><rect x="798" y="207" width="1" height="27" fill="#626262"/><rect x="658" y="259" width="141" height="1" fill="#8e8e8e"/><rect x="657" y="286" width="143" height="1" fill="#626262"/><rect x="658" y="259" width="1" height="27" fill="#888"/><rect x="795" y="259" width="1" height="27" fill="#7e7e7e"/><rect x="798" y="259" width="1" height="27" fill="#626262"/><rect x="658" y="311" width="141" height="1" fill="#8e8e8e"/><rect x="657" y="338" width="143" height="1" fill="#626262"/><rect x="658" y="311" width="1" height="27" fill="#888"/><rect x="795" y="311" width="1" height="27" fill="#7e7e7e"/><rect x="798" y="311" width="1" height="27" fill="#626262"/><rect x="658" y="363" width="141" height="1" fill="#8e8e8e"/><rect x="657" y="390" width="143" height="1" fill="#626262"/><rect x="658" y="363" width="1" height="27" fill="#888"/><rect x="795" y="363" width="1" height="27" fill="#7e7e7e"/><rect x="798" y="363" width="1" height="27" fill="#626262"/><rect x="658" y="415" width="141" height="1" fill="#8e8e8e"/><rect x="657" y="442" width="143" height="1" fill="#626262"/><rect x="658" y="415" width="1" height="27" fill="#888"/><rect x="795" y="415" width="1" height="27" fill="#7e7e7e"/><rect x="798" y="415" width="1" height="27" fill="#626262"/><polygon points="666,84 680.5,91.2 666,98.4" fill="#f26412"/><path d="M722,61.5 Q721.5,55.6 728,55.6 Q734,55.6 734,60 Q734,62.8 730.5,65.2 Q728.5,66.8 728.5,70.2" fill="none" stroke="#f2f22a" stroke-width="3" transform="translate(0,0)"/><rect x="727" y="71.8" width="3.2" height="3.2" fill="#f2f22a"/><path d="M722,61.5 Q721.5,55.6 728,55.6 Q734,55.6 734,60 Q734,62.8 730.5,65.2 Q728.5,66.8 728.5,70.2" fill="none" stroke="#f2f22a" stroke-width="3" transform="translate(0,52)"/><rect x="727" y="123.8" width="3.2" height="3.2" fill="#f2f22a"/><path d="M722,61.5 Q721.5,55.6 728,55.6 Q734,55.6 734,60 Q734,62.8 730.5,65.2 Q728.5,66.8 728.5,70.2" fill="none" stroke="#f2f22a" stroke-width="3" transform="translate(0,104)"/><rect x="727" y="175.8" width="3.2" height="3.2" fill="#f2f22a"/><path d="M722,61.5 Q721.5,55.6 728,55.6 Q734,55.6 734,60 Q734,62.8 730.5,65.2 Q728.5,66.8 728.5,70.2" fill="none" stroke="#f2f22a" stroke-width="3" transform="translate(0,156)"/><rect x="727" y="227.8" width="3.2" height="3.2" fill="#f2f22a"/><path d="M681.5,475.5 L678.5,472.5 V454.5 L681.5,451.5 H773.5" fill="none" stroke="#e8e8e8" stroke-width="1.1"/><path d="M773.5,451.5 L777.5,455 V472.5 L774.5,475.5 H682" fill="none" stroke="#1a1a1a" stroke-width="1.2"/></svg>
<div class="t" id="s_red" style="font-weight:700;font-size:22px;letter-spacing:0.00px;color:#e3122c;transform:matrix(0.9107,0,0,1.0057,169.833,3.580);-webkit-text-stroke:0.8px #e3122c">S</div>
<div class="t" id="m_box" style="font-weight:700;font-size:18px;letter-spacing:0.00px;color:#c8f4f4;transform:matrix(0.9590,0,0,0.9137,276.519,5.719);-webkit-text-stroke:0.5px #c8f4f4">M</div>
<div class="t" id="tb1" style="font-weight:400;font-size:15px;letter-spacing:2.00px;color:#ffffff;transform:matrix(0.9802,0,0,1.1291,326.093,5.824);">2.00s</div>
<div class="t" id="w_box" style="font-weight:700;font-size:18px;letter-spacing:0.00px;color:#c8f4f4;transform:matrix(0.9613,0,0,0.9609,523.575,5.506);-webkit-text-stroke:0.5px #c8f4f4">W</div>
<div class="t" id="tb2" style="font-weight:400;font-size:15px;letter-spacing:2.00px;color:#ffffff;transform:matrix(0.9792,0,0,1.1291,574.771,5.824);">2.00s</div>
<div class="t" id="pos" style="font-weight:400;font-size:14px;letter-spacing:2.00px;color:#ffffff;transform:matrix(0.8796,0,0,1.0814,312.038,29.921);">0.000s</div>
<div class="t" id="measure" style="font-weight:400;font-size:21px;letter-spacing:0.30px;color:#ffffff;transform:matrix(0.9868,0,0,0.9823,675.358,2.447);-webkit-text-stroke:0.3px #fff">Measure</div>
<div class="t" id="l_min" style="font-weight:400;font-size:14px;letter-spacing:2.60px;color:#f2f22a;transform:matrix(0.9163,0,0,1.1504,680.825,30.816);">Minimum</div>
<div class="t" id="l_mean" style="font-weight:400;font-size:14px;letter-spacing:2.60px;color:#f2f22a;transform:matrix(0.8635,0,0,1.2000,680.841,82.272);">Mean</div>
<div class="t" id="l_crms" style="font-weight:400;font-size:14px;letter-spacing:2.60px;color:#f2f22a;transform:matrix(1.0772,0,0,1.2496,681.695,132.926);">Cyclic</div>
<div class="t" id="l_crms2" style="font-weight:400;font-size:14px;letter-spacing:2.60px;color:#f2f22a;transform:matrix(0.8115,0,0,1.2566,741.313,132.502);">RMS</div>
<div class="t" id="l_pkpk" style="font-weight:400;font-size:14px;letter-spacing:2.60px;color:#f2f22a;transform:matrix(1.0243,0,0,1.2221,680.640,185.435);">Pk-Pk</div>
<div class="t" id="c_mean" style="font-weight:400;font-size:14px;letter-spacing:2.60px;color:#1ee6ea;transform:matrix(0.8547,0,0,1.2000,681.512,238.136);">Mean</div>
<div class="t" id="v1" style="font-weight:400;font-size:29px;letter-spacing:1.50px;color:#1ee6ea;transform:matrix(0.9852,0,0,1.0286,678.982,258.140);-webkit-text-stroke:0.5px #1ee6ea">200mV</div>
<div class="t" id="c_min" style="font-weight:400;font-size:14px;letter-spacing:2.60px;color:#1ee6ea;transform:matrix(0.9120,0,0,1.1504,680.837,290.269);">Minimum</div>
<div class="t" id="v2" style="font-weight:400;font-size:29px;letter-spacing:1.50px;color:#1ee6ea;transform:matrix(0.9657,0,0,1.0294,680.495,310.133);-webkit-text-stroke:0.5px #1ee6ea">120mV</div>
<div class="t" id="c_max" style="font-weight:400;font-size:14px;letter-spacing:2.60px;color:#1ee6ea;transform:matrix(0.8664,0,0,1.2221,680.849,341.031);">Maximum</div>
<div class="t" id="v3" style="font-weight:400;font-size:29px;letter-spacing:1.50px;color:#1ee6ea;transform:matrix(0.9208,0,0,1.0531,689.634,361.462);-webkit-text-stroke:0.5px #1ee6ea">3.12V</div>
<div class="t" id="c_pkpk" style="font-weight:400;font-size:14px;letter-spacing:2.60px;color:#1ee6ea;transform:matrix(1.0298,0,0,1.1504,680.363,394.126);">Pk-Pk</div>
<div class="t" id="v4" style="font-weight:400;font-size:29px;letter-spacing:1.50px;color:#1ee6ea;transform:matrix(0.9369,0,0,1.0494,688.769,414.301);-webkit-text-stroke:0.5px #1ee6ea">3.00V</div>
<div class="t" id="modify" style="font-weight:400;font-size:14px;letter-spacing:2.60px;color:#f4f4f4;transform:matrix(1.0508,0,0,1.2678,698.663,454.295);">Modify</div>
<div class="t" id="dc" style="font-weight:700;font-size:11px;letter-spacing:0.00px;color:#36c8e6;transform:matrix(1.0877,0,0,1.1250,175.745,462.897);">DC</div>
<div class="t" id="twenty" style="font-weight:400;font-size:13px;letter-spacing:0.50px;color:#3ccbef;transform:matrix(0.8755,0,0,1.2035,201.584,457.274);-webkit-text-stroke:0.35px #3ccbef">20</div>
<div class="t" id="b_1v" style="font-weight:400;font-size:15px;letter-spacing:1.80px;color:#38dcc4;transform:matrix(0.9654,0,0,1.1535,265.431,456.824);">1.00V</div>
<div class="t" id="ch2" style="font-weight:400;font-size:15px;letter-spacing:1.50px;color:#38dcc4;transform:matrix(0.8468,0,0,1.3015,353.750,454.253);">CH2</div>
<div class="t" id="b_3v" style="font-weight:400;font-size:15px;letter-spacing:1.80px;color:#38dcc4;transform:matrix(0.9560,0,0,1.1736,421.135,455.940);">3.00V</div>
<div class="t" id="hz" style="font-weight:400;font-size:15px;letter-spacing:1.80px;color:#38dcc4;transform:matrix(0.9389,0,0,1.1736,563.364,456.319);">0Hz</div>
<div class="t" id="mk2" style="font-weight:700;font-size:15px;letter-spacing:0.00px;color:#164a56;transform:matrix(0.9103,0,0,1.1499,0.903,379.608);">2</div>
</body></html>
